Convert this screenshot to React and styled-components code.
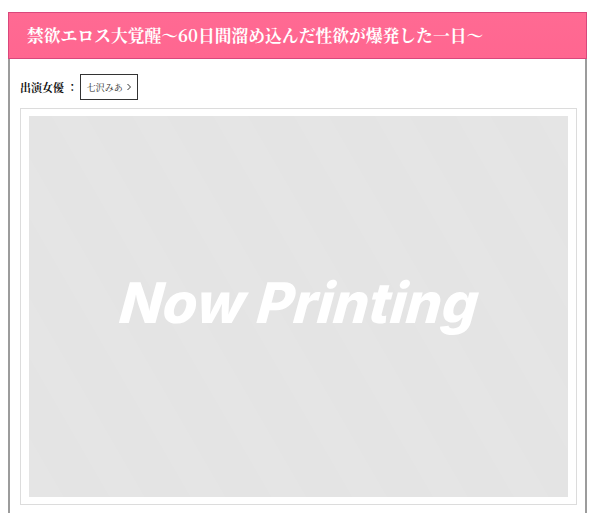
import React from "react";
import styled, { createGlobalStyle } from "styled-components";

const Global = createGlobalStyle`
  html, body { margin: 0; padding: 0; background: #fff; }
  body { font-family: "Noto Sans CJK JP", "Noto Sans", sans-serif; }
`;

const Page = styled.div`
  padding: 12px 13px 0 8px;
  width: 579px;
`;

const Header = styled.h1`
  margin: 0;
  height: 47px;
  box-sizing: border-box;
  display: flex;
  align-items: center;
  padding: 0 18px 2px;
  background: linear-gradient(#ff6a93, #ff6690);
  border: 1px solid #d9477c;
  color: #fff;
  font-family: "Noto Serif CJK JP", "Noto Sans CJK JP", serif;
  font-size: 16.8px;
  font-weight: 700;
  letter-spacing: 0;
  white-space: nowrap;
`;

const Body = styled.div`
  border-left: 2px solid #9c9c9c;
  border-right: 2px solid #9c9c9c;
  padding: 15px 8px 20px 10px;
`;

const CastRow = styled.div`
  display: flex;
  align-items: center;
  gap: 2px;
  height: 26px;
`;

const Label = styled.span`
  font-family: "Noto Serif CJK JP", "Noto Sans CJK JP", serif;
  font-size: 11px;
  font-weight: 700;
  color: #111;
`;

const Actress = styled.a`
  display: inline-flex;
  align-items: center;
  gap: 3px;
  height: 26px;
  box-sizing: border-box;
  padding: 0 5px 0 6px;
  border: 1px solid #333;
  font-family: "Noto Serif CJK JP", "Noto Sans CJK JP", serif;
  font-size: 9px;
  color: #222;
  text-decoration: none;
`;

const Frame = styled.div`
  margin-top: 8px;
  width: 557px;
  box-sizing: border-box;
  border: 1px solid #dcdcdc;
  padding: 7px 8px 7px 8px;
  background: #fff;
`;

const Jacket = styled.div`
  height: 381px;
  display: flex;
  align-items: center;
  justify-content: center;
  background:
    repeating-linear-gradient(60deg, rgba(255,255,255,0.05) 0 30px, rgba(0,0,0,0.0) 30px 70px),
    #e4e4e4;
`;

const NowPrinting = styled.span`
  font-family: Inter, "Liberation Sans", sans-serif;
  font-style: italic;
  font-weight: 800;
  font-size: 56px;
  letter-spacing: 0px;
  color: #fff;
  transform: skewX(-6deg);
  padding-bottom: 8px;
`;

export default function App() {
  return (
    <>
      <Global />
      <Page>
        <Header>禁欲エロス大覚醒〜60日間溜め込んだ性欲が爆発した一日〜</Header>
        <Body>
          <CastRow>
            <Label>出演女優 ：</Label>
            <Actress href="#">
              七沢みあ
              <svg width="6" height="8" viewBox="0 0 6 8" fill="none">
                <path d="M1.5 1 L4.5 4 L1.5 7" stroke="#333" strokeWidth="1" />
              </svg>
            </Actress>
          </CastRow>
          <Frame>
            <Jacket>
              <NowPrinting>Now Printing</NowPrinting>
            </Jacket>
          </Frame>
        </Body>
      </Page>
    </>
  );
}
